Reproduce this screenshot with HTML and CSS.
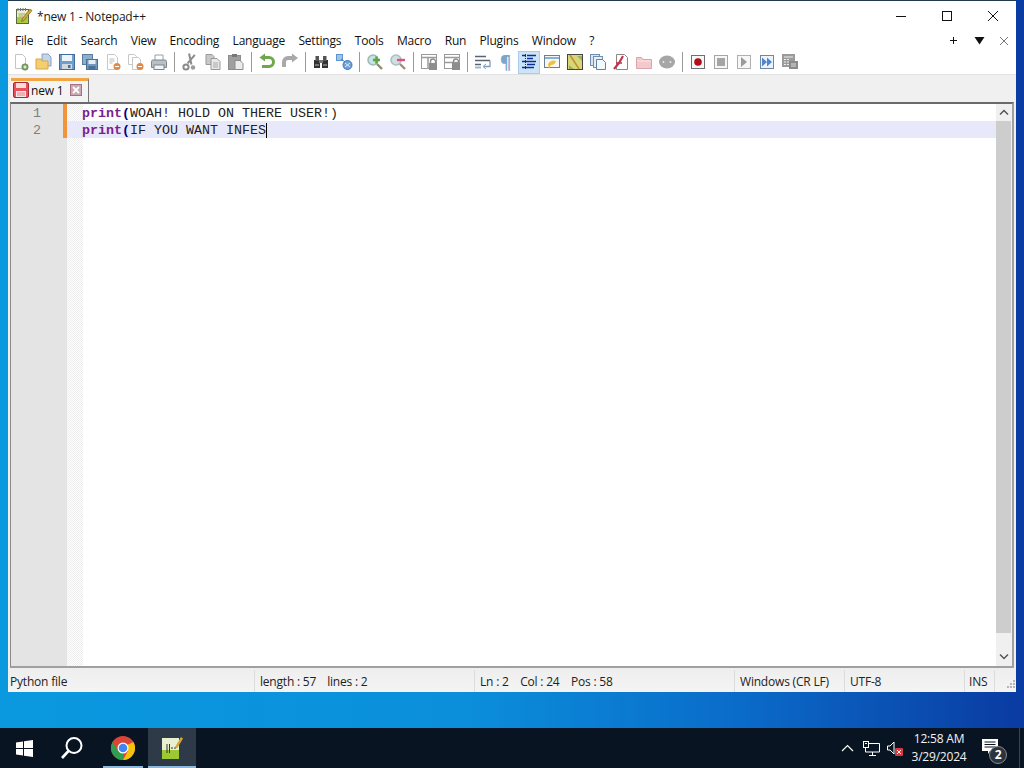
FILE: index.html

```html
<!DOCTYPE html>
<html lang="en">
<head>
    <meta charset="UTF-8">
    <title>*new 1 - Notepad++</title>
    <link rel="stylesheet" href="styles.css">
</head>
<body>

    <div class="window">

        <!-- Title bar -->
        <div class="titlebar">
            <svg class="app-icon" width="18" height="18" viewBox="0 0 18 18">
                <rect x="1.5" y="2.5" width="12" height="14" fill="#e8f0c8" stroke="#5c6648"/>
                <rect x="2" y="10" width="11" height="6" fill="#a5cc3c"/>
                <path d="M3 1v3M5.5 1v3M8 1v3M10.5 1v3" stroke="#777"/>
                <path d="M3.5 7h7M3.5 9h5" stroke="#9aa080"/>
                <path d="M7 12L15 2l2 1.5L9 13.5 6.5 14.5z" fill="#d9a53a" stroke="#6b5520" stroke-width=".6"/>
            </svg>
            <span class="title-text">*new 1 - Notepad++</span>
            <div class="win-controls">
                <div class="win-btn">
                    <svg width="12" height="12" viewBox="0 0 12 12"><path d="M1 6.5h10" stroke="#111"/></svg>
                </div>
                <div class="win-btn">
                    <svg width="12" height="12" viewBox="0 0 12 12"><rect x="1.5" y="1.5" width="9" height="9" fill="none" stroke="#111"/></svg>
                </div>
                <div class="win-btn">
                    <svg width="12" height="12" viewBox="0 0 12 12"><path d="M1 1l10 10M11 1L1 11" stroke="#111"/></svg>
                </div>
            </div>
        </div>

        <!-- Menu -->
        <div class="menubar">
            <ul class="menu-links">
                <li>File</li>
                <li>Edit</li>
                <li>Search</li>
                <li>View</li>
                <li>Encoding</li>
                <li>Language</li>
                <li>Settings</li>
                <li>Tools</li>
                <li>Macro</li>
                <li>Run</li>
                <li>Plugins</li>
                <li>Window</li>
                <li>?</li>
            </ul>
            <div class="menu-extra">
                <svg width="9" height="9" viewBox="0 0 9 9"><path d="M4.5 1v7M1 4.5h7" stroke="#111"/></svg>
                <svg width="11" height="9" viewBox="0 0 11 9"><path d="M.5 1h10L5.5 8.5z" fill="#111"/></svg>
                <svg width="10" height="10" viewBox="0 0 10 10"><path d="M1 1l8 8M9 1L1 9" stroke="#777"/></svg>
            </div>
        </div>

        <!-- Toolbar -->
        <div class="toolbar">
            <div class="tool"><svg viewBox="0 0 18 18"><path d="M3.5 1.5h7l3 3v11h-10z" fill="#fff" stroke="#c4c4c4"/><circle cx="13" cy="14" r="3.2" fill="#7fa268" stroke="#5d7a4d" stroke-width=".6"/><path d="M11.5 14h3M13 12.5v3" stroke="#fff"/></svg></div>
            <div class="tool"><svg viewBox="0 0 18 18"><path d="M7 1h6l3 3v9H7z" fill="#c4d4ea" stroke="#8aa2c4"/><path d="M1 6h5l1 2h6v8H1z" fill="#f3cf72" stroke="#d9a943"/></svg></div>
            <div class="tool"><svg viewBox="0 0 18 18"><rect x="1.5" y="1.5" width="15" height="15" fill="#6f9dcc" stroke="#3f6c9e"/><rect x="4" y="2" width="10" height="6" fill="#eef3f8"/><rect x="4" y="11" width="10" height="5" fill="#cfd8de"/><rect x="10" y="12" width="2.5" height="3" fill="#4a6f96"/></svg></div>
            <div class="tool"><svg viewBox="0 0 18 18"><rect x="1.5" y="1.5" width="10" height="10" fill="#8dafca" stroke="#5a7d9e"/><rect x="5.5" y="6.5" width="11" height="10" fill="#7199bd" stroke="#4a7096"/><rect x="7.5" y="7" width="7" height="4" fill="#e5edf3"/><rect x="7.5" y="13" width="7" height="3" fill="#4a7096"/></svg></div>
            <div class="tool"><svg viewBox="0 0 18 18"><path d="M3.5 1.5h7l3 3v12h-10z" fill="#fff" stroke="#c8c8c8"/><path d="M5.5 6h5M5.5 8h5M5.5 10h3" stroke="#bbb"/><circle cx="13" cy="13.5" r="3.5" fill="#e08a4a"/><path d="M11 13.5h4" stroke="#fff"/></svg></div>
            <div class="tool"><svg viewBox="0 0 18 18"><path d="M1.5 1.5h6l2 2v8h-8z" fill="#fff" stroke="#c8c8c8"/><path d="M5.5 4.5h6l2 2v10h-8z" fill="#fff" stroke="#c8c8c8"/><circle cx="13" cy="13.5" r="3.5" fill="#e08a4a"/><path d="M11 13.5h4" stroke="#fff"/></svg></div>
            <div class="tool"><svg viewBox="0 0 18 18"><path d="M5 7V2h8v5" fill="#fff" stroke="#9aa0a6"/><path d="M1.5 8.5Q1.5 7 3 7h12q1.5 0 1.5 1.5v6h-15z" fill="#b9c0c7" stroke="#7e868e"/><rect x="4" y="12" width="10" height="4.5" fill="#f4f4f4" stroke="#7e868e"/></svg></div>
            <div class="tool-sep"></div>
            <div class="tool"><svg viewBox="0 0 18 18"><path d="M12 1L7 11M6 1l5 10" stroke="#8b8b8b" stroke-width="2" transform="rotate(14 9 9)"/><circle cx="5" cy="14" r="2.6" fill="none" stroke="#8b8b8b" stroke-width="2"/><circle cx="12" cy="14.5" r="2.2" fill="#9c9c9c"/></svg></div>
            <div class="tool"><svg viewBox="0 0 18 18"><path d="M2 1.5h6l2 2v8H2z" fill="#c8c8c8" stroke="#999"/><path d="M7 5.5h6l3 3v8H7z" fill="#e8e8e8" stroke="#999"/><path d="M9 10h5M9 12h5M9 14h5" stroke="#aaa"/></svg></div>
            <div class="tool"><svg viewBox="0 0 18 18"><rect x="1.5" y="2.5" width="12" height="14" fill="#9f9f9f" stroke="#8c8c8c"/><rect x="5" y="1" width="5" height="3" fill="#777"/><path d="M8 7.5h5l3 3v6H8z" fill="#ececec" stroke="#8c8c8c"/></svg></div>
            <div class="tool-sep"></div>
            <div class="tool"><svg viewBox="0 0 18 18"><path d="M5.5 4.5H11a4.5 4.5 0 0 1 0 9H4" fill="none" stroke="#6fa84a" stroke-width="3"/><path d="M7 .5v8L1.5 4.5z" fill="#6fa84a"/></svg></div>
            <div class="tool"><svg viewBox="0 0 18 18"><path d="M12.5 5H7a4 4 0 0 0-4 4v5" fill="none" stroke="#a9a9a9" stroke-width="4"/><path d="M11 .5v9L17 5z" fill="#a9a9a9"/></svg></div>
            <div class="tool-sep"></div>
            <div class="tool"><svg viewBox="0 0 18 18"><rect x="2" y="7" width="6" height="8" fill="#333"/><rect x="10" y="7" width="6" height="8" fill="#333"/><rect x="3.5" y="3" width="3.5" height="5" fill="#555"/><rect x="11" y="3" width="3.5" height="5" fill="#555"/><rect x="7" y="7" width="4" height="3" fill="#777"/><path d="M3 12h4M11 12h4" stroke="#bbb"/></svg></div>
            <div class="tool"><svg viewBox="0 0 18 18"><rect x="1.5" y="1.5" width="6" height="6" fill="#9cc4ea" stroke="#5f96cf"/><circle cx="12.5" cy="12" r="4.5" fill="#6fa0d8" stroke="#3f78b8"/><path d="M10 10l5 4M15 10l-5 4" stroke="#dbe8f5"/><path d="M6 6l4 3" stroke="#3f78b8"/></svg></div>
            <div class="tool-sep"></div>
            <div class="tool"><svg viewBox="0 0 18 18"><circle cx="7" cy="7" r="5" fill="#c3e4e0" stroke="#9db8b8" stroke-width="1.5"/><path d="M11 11l5 5" stroke="#8b8f70" stroke-width="2.4"/><path d="M7 7h7M10.5 3.5v7" stroke="#5da53f" stroke-width="2.4"/></svg></div>
            <div class="tool"><svg viewBox="0 0 18 18"><circle cx="7" cy="7" r="5" fill="#cfe0e4" stroke="#aebcc0" stroke-width="1.5"/><path d="M11 11l5 5" stroke="#a08c80" stroke-width="2.4"/><path d="M8 7h8" stroke="#e0507a" stroke-width="2.4"/></svg></div>
            <div class="tool-sep"></div>
            <div class="tool"><svg viewBox="0 0 18 18"><rect x="1.5" y="1.5" width="15" height="14" fill="#fff" stroke="#9a9a9a"/><path d="M2 4.5h14M8 5v10" stroke="#9a9a9a" stroke-width="1.5"/><rect x="9" y="10" width="8" height="7" fill="#8d8d8d"/><path d="M10.5 10V8.5a2.5 2.5 0 0 1 5 0V10" fill="none" stroke="#8d8d8d" stroke-width="1.4"/></svg></div>
            <div class="tool"><svg viewBox="0 0 18 18"><rect x="1.5" y="1.5" width="15" height="14" fill="#fff" stroke="#9a9a9a"/><path d="M2 4.5h14M2 9.5h14" stroke="#9a9a9a" stroke-width="1.5"/><rect x="9" y="10" width="8" height="7" fill="#8d8d8d"/><path d="M10.5 10V8.5a2.5 2.5 0 0 1 5 0V10" fill="none" stroke="#8d8d8d" stroke-width="1.4"/></svg></div>
            <div class="tool-sep"></div>
            <div class="tool"><svg viewBox="0 0 18 18"><path d="M1 3.5h11M1 7.5h15M1 11.5h6" stroke="#5a6472" stroke-width="1.4"/><path d="M16 7.5v6H10" fill="none" stroke="#7c9cc0" stroke-width="1.3"/><path d="M12 11l-3 2.5 3 2.5" fill="none" stroke="#7c9cc0"/><path d="M1 14.5h6" stroke="#9fb6d0" stroke-width="2"/></svg></div>
            <div class="tool tool-pilcrow">¶</div>
            <div class="tool tool-active"><svg viewBox="0 0 18 18"><path d="M5.5 1v16" stroke="#0b2f99" stroke-dasharray="1 1"/><path d="M2 2.5h4M7 2.5h9M7 5.5h6M2 8.5h14M7 11.5h8M2 14.5h12" stroke="#0b2f99" stroke-width="1.5"/></svg></div>
            <div class="tool"><svg viewBox="0 0 18 18"><rect x="1.5" y="2.5" width="15" height="12" fill="#f6f6f6" stroke="#6b7f8f"/><path d="M2 5h14" stroke="#6fa0cc" stroke-width="1.6"/><path d="M5 11q3-5 8-3-1 4-5 4l-2 4z" fill="#f1c038"/></svg></div>
            <div class="tool"><svg viewBox="0 0 18 18"><rect x="1.5" y="1.5" width="15" height="15" fill="#d9d67a" stroke="#444"/><path d="M4 2l9 14" stroke="#b8902e" stroke-width="1.4"/><path d="M11 3h5v5zM3 12l5 4H3z" fill="#9ab35a"/></svg></div>
            <div class="tool"><svg viewBox="0 0 18 18"><rect x="1.5" y="1.5" width="9" height="11" fill="#d8e4f0" stroke="#6f8fb0"/><rect x="4.5" y="3.5" width="9" height="11" fill="#e6eef6" stroke="#6f8fb0"/><path d="M7.5 6.5h6l3 3v7h-9z" fill="#f4f8fc" stroke="#5f82a8"/></svg></div>
            <div class="tool"><svg viewBox="0 0 18 18"><path d="M4.5 1.5h8l3 3v12h-11z" fill="#fff" stroke="#8f8585"/><path d="M2 16l5-6M7 10l4-7" stroke="#c2354e" stroke-width="2.2"/><path d="M4 10h6" stroke="#c2354e" stroke-width="1.6"/></svg></div>
            <div class="tool"><svg viewBox="0 0 18 18"><path d="M1.5 4.5h5l1.5 2h8.5v9h-15z" fill="#f4c9cd" stroke="#d9a5aa"/><path d="M2 8h14" stroke="#fbe4e6"/></svg></div>
            <div class="tool"><svg viewBox="0 0 18 18"><ellipse cx="9" cy="9" rx="8" ry="6.5" fill="#a6a6a6"/><circle cx="5.5" cy="9" r=".9" fill="#eee"/><circle cx="12.5" cy="9" r=".9" fill="#eee"/></svg></div>
            <div class="tool-sep"></div>
            <div class="tool"><svg viewBox="0 0 18 18"><rect x="2.5" y="2.5" width="13" height="13" fill="#f7f7f7" stroke="#6a6f78"/><circle cx="9" cy="9" r="3.8" fill="#b00d16"/></svg></div>
            <div class="tool"><svg viewBox="0 0 18 18"><rect x="2.5" y="2.5" width="13" height="13" fill="#f7f7f7" stroke="#a5a5a5"/><rect x="5" y="5" width="8" height="8" fill="#a5a5a5"/></svg></div>
            <div class="tool"><svg viewBox="0 0 18 18"><rect x="2.5" y="2.5" width="13" height="13" fill="#f7f7f7" stroke="#b0b0b0"/><path d="M6 4l6 5-6 5z" fill="#9a9a9a"/></svg></div>
            <div class="tool"><svg viewBox="0 0 18 18"><rect x="2.5" y="2.5" width="13" height="13" fill="#eef3f9" stroke="#6d87a5"/><path d="M4 4.5L9 9l-5 4.5zM9 4.5L14 9l-5 4.5z" fill="#4f85cf"/></svg></div>
            <div class="tool"><svg viewBox="0 0 18 18"><rect x="1" y="1" width="13" height="13" fill="#9b9b9b"/><path d="M3 4h9M3 6.5h2M6 6.5h2M3 9h2M6 9h2M3 11.5h2M6 11.5h2" stroke="#eee"/><rect x="8" y="8" width="9" height="8" fill="#8a8a8a"/><path d="M10 11h5M10 13h5" stroke="#ddd"/></svg></div>
        </div>

        <!-- Tabs -->
        <div class="tabbar">
            <div class="tab">
                <svg class="tab-icon" width="16" height="16" viewBox="0 0 16 16">
                    <rect x=".5" y=".5" width="15" height="15" rx="1.5" fill="#e8505a" stroke="#a82a34"/>
                    <rect x="3" y="1" width="10" height="5" fill="#f8dcdc"/>
                    <rect x="3" y="9" width="10" height="6" fill="#f8e8e8"/>
                    <path d="M4 11h8M4 13h8" stroke="#e07a80"/>
                </svg>
                <span class="tab-name">new 1</span>
                <svg class="tab-close" width="12" height="12" viewBox="0 0 12 12">
                    <rect x=".5" y=".5" width="11" height="11" fill="#c9a9b5" stroke="#a8707f"/>
                    <path d="M3 3l6 6M9 3L3 9" stroke="#fff" stroke-width="1.8"/>
                </svg>
            </div>
        </div>

        <!-- Editor -->
        <div class="editor">
            <div class="line-numbers">
                <div>1</div>
                <div>2</div>
            </div>
            <div class="changes"></div>
            <div class="code">
                <div class="line"><span class="kw">print</span><span class="op">(</span>WOAH! HOLD ON THERE USER!)</div>
                <div class="line current"><span class="kw">print</span><span class="op">(</span><span class="caret">IF YOU WANT INFES</span></div>
            </div>
            <div class="scrollbar">
                <div class="scroll-arrow">
                    <svg width="10" height="7" viewBox="0 0 10 7"><path d="M1 5.5l4-4 4 4" fill="none" stroke="#555" stroke-width="1.5"/></svg>
                </div>
                <div class="scroll-thumb"></div>
                <div class="scroll-arrow">
                    <svg width="10" height="7" viewBox="0 0 10 7"><path d="M1 1.5l4 4 4-4" fill="none" stroke="#555" stroke-width="1.5"/></svg>
                </div>
            </div>
        </div>

        <!-- Status bar -->
        <div class="statusbar">
            <div class="cell cell-type">Python file</div>
            <div class="cell cell-size"><span>length : 57</span><span>lines : 2</span></div>
            <div class="cell cell-pos"><span>Ln : 2</span><span>Col : 24</span><span>Pos : 58</span></div>
            <div class="cell cell-eol">Windows (CR LF)</div>
            <div class="cell cell-enc">UTF-8</div>
            <div class="cell cell-ins">INS</div>
            <div class="cell cell-grip">
                <svg width="12" height="12" viewBox="0 0 12 12"><path d="M9 2h2v2H9zM6 5h2v2H6zM9 5h2v2H9zM3 8h2v2H3zM6 8h2v2H6zM9 8h2v2H9z" fill="#b5b5b5"/></svg>
            </div>
        </div>
    </div>

    <!-- Taskbar -->
    <div class="taskbar">
        <div class="task-btn">
            <svg width="17" height="17" viewBox="0 0 17 17"><path d="M0 2.5l7-1V8H0zM8 1.3L17 0v8H8zM0 9h7v6.5l-7-1zM8 9h9v8l-9-1.3z" fill="#fff"/></svg>
        </div>
        <div class="task-btn">
            <svg width="24" height="24" viewBox="0 0 24 24"><circle cx="14" cy="9.5" r="7.5" fill="none" stroke="#fff" stroke-width="2"/><path d="M8.5 15L2 22" stroke="#fff" stroke-width="2.6"/></svg>
        </div>
        <div class="task-btn task-open">
            <svg width="24" height="24" viewBox="0 0 24 24">
                <circle cx="12" cy="12" r="12" fill="#db4437"/>
                <path d="M12 24A12 12 0 0 1 1.6 6L7 15l5 1z" fill="#2f9e4f"/>
                <path d="M22.4 6A12 12 0 0 1 12 24l5-9-1-6z" fill="#f4c20d"/>
                <circle cx="12" cy="12" r="5.5" fill="#fff"/>
                <circle cx="12" cy="12" r="4.3" fill="#4285f4"/>
            </svg>
        </div>
        <div class="task-btn task-open task-active">
            <svg width="24" height="26" viewBox="0 0 24 26">
                <rect x="2" y="3" width="17" height="21" fill="#e9f0cf"/>
                <rect x="2" y="15" width="17" height="9" fill="#9cc832"/>
                <path d="M7 9v9M9.5 9v9" stroke="#333"/>
                <path d="M11 13h5" stroke="#333" stroke-dasharray="2 1"/>
                <path d="M15 12l6-10 2 1.5-6 10z" fill="#d9a53a"/>
            </svg>
        </div>
        <div class="tray">
            <div class="tray-icon">
                <svg width="13" height="8" viewBox="0 0 13 8"><path d="M1 7l5.5-5.5L12 7" fill="none" stroke="#fff" stroke-width="1.2"/></svg>
            </div>
            <div class="tray-icon">
                <svg width="17" height="15" viewBox="0 0 17 15"><path d="M4.5 2.5h12V11h-14V7M9.5 11v3M6 14.5h7" fill="none" stroke="#fff"/><rect x=".5" y=".5" width="5" height="6" fill="#0a1420" stroke="#fff"/><path d="M2 2.5h2" stroke="#fff"/></svg>
            </div>
            <div class="tray-icon">
                <svg width="18" height="15" viewBox="0 0 18 15"><path d="M1.5 5v4H4l4 4V1L4 5z" fill="none" stroke="#fff"/><rect x="9" y="7" width="8" height="8" rx="1" fill="#d8353d"/><path d="M11 9l4 4M15 9l-4 4" stroke="#fff"/></svg>
            </div>
            <div class="clock">
                <div>12:58 AM</div>
                <div>3/29/2024</div>
            </div>
            <div class="notify">
                <svg width="17" height="15" viewBox="0 0 17 15"><path d="M0 0h16v12H8l-2 3v-3H0z" fill="#fff"/><path d="M2.5 3h11M2.5 5.5h11M2.5 8h11" stroke="#0a1420"/></svg>
                <span class="notify-badge">2</span>
            </div>
            <div class="show-desktop"></div>
        </div>
    </div>

</body>
</html>
```

FILE: styles.css

```css
/* General */
* {
    margin: 0;
    padding: 0;
    box-sizing: border-box;
}

body {
    width: 1024px;
    height: 768px;
    display: flex;
    flex-direction: column;
    overflow: hidden;
    font-family: "Open Sans", "Liberation Sans", sans-serif;
    font-size: 12px;
    letter-spacing: -0.2px;
    color: #111;
    background: linear-gradient(to right, #0a99df 0%, #0b8fdb 45%, #0a6cc9 72%, #0a3ba2 100%);
}

svg {
    display: block;
}

/* Window */
.window {
    height: 692px;
    margin: 0 8px 36px;
    display: flex;
    flex-direction: column;
    background: #f0f0f0;
    border-top: 1px solid #22384c;
}

.titlebar {
    height: 30px;
    display: flex;
    align-items: center;
    background: #fff;
    padding-left: 7px;
}

.app-icon {
    margin-right: 4px;
}

.title-text {
    flex: 1;
    color: #1a1a1a;
}

.win-controls {
    display: flex;
}

.win-btn {
    width: 46px;
    height: 30px;
    display: flex;
    align-items: center;
    justify-content: center;
}

/* Menu */
.menubar {
    height: 19px;
    display: flex;
    align-items: center;
    justify-content: space-between;
    background: #fff;
    padding-left: 7px;
}

.menu-links {
    list-style: none;
    display: flex;
    gap: 13.4px;
}

.menu-extra {
    display: flex;
    align-items: center;
    gap: 14px;
    padding-right: 7px;
}

.menu-extra svg:first-child {
    margin-right: 2px;
}

/* Toolbar */
.toolbar {
    height: 25px;
    display: flex;
    align-items: center;
    padding-left: 1px;
    background: #fff;
    border-bottom: 1px solid #e2e2e2;
}

.tool {
    width: 23px;
    height: 23px;
    display: flex;
    align-items: center;
    justify-content: center;
}

.tool svg {
    width: 18px;
    height: 18px;
}

.tool-active {
    width: 22px;
    margin-left: 1px;
    background: #cde4f7;
    border: 1px solid #a8cdec;
}

.tool-pilcrow {
    font-size: 17px;
    font-weight: 700;
    color: #7aa6cc;
}

.tool-sep {
    width: 8px;
    height: 20px;
    display: flex;
    justify-content: center;
}

.tool-sep::before {
    content: "";
    width: 1px;
    background: #9a9a9a;
}

/* Tabs */
.tabbar {
    height: 27px;
    padding: 3px 0 0 3px;
    background: #f0f0f0;
}

.tab {
    width: 78px;
    height: 24px;
    display: flex;
    align-items: center;
    padding: 0 0 3px 2px;
    background: #f4f4f4;
    border-top: 3px solid #f2a544;
    border-right: 1px solid #777;
}

.tab-name {
    margin-left: 2px;
    width: 39px;
}

/* Editor */
.editor {
    flex: 1;
    display: flex;
    margin: 0 2px;
    background: #fff;
    border-top: 2px solid #6a6a6a;
    border-left: 1px solid #8a8a8a;
    border-right: 2px solid #a0a0a0;
    border-bottom: 2px solid #a0a0a0;
    font-family: "Liberation Mono", monospace;
    font-size: 13.33px;
    letter-spacing: 0;
    line-height: 19px;
}

.line-numbers {
    width: 52px;
    background: #e4e4e4;
    color: #808080;
    text-align: right;
    padding-right: 22px;
}

.line-numbers div {
    height: 17px;
}

.changes {
    width: 4px;
    background: linear-gradient(#f2943a, #f2943a) top / 100% 34px no-repeat, #e4e4e4;
}

.code {
    flex: 1;
    background:
        linear-gradient(to right, transparent 16px, #fff 16px),
        repeating-conic-gradient(#ededed 0 25%, #fff 0 50%) 0 0 / 2px 2px;
    color: #222;
}

.line {
    height: 17px;
    padding-left: 15px;
    white-space: pre;
}

.line.current {
    background: #e8e8fb;
}

.kw {
    color: #7a1f8c;
    font-weight: 700;
}

.op {
    color: #000080;
    font-weight: 700;
}

.caret {
    border-right: 1px solid #000;
}

/* Scrollbar */
.scrollbar {
    width: 16px;
    display: flex;
    flex-direction: column;
    background: #f0f0f0;
}

.scroll-arrow {
    height: 17px;
    display: flex;
    align-items: center;
    justify-content: center;
}

.scroll-thumb {
    height: 512px;
    margin-right: 1px;
    background: #cdcdcd;
}

.scroll-thumb + .scroll-arrow {
    margin-top: auto;
    margin-bottom: 1px;
}

/* Status bar */
.statusbar {
    height: 24px;
    display: grid;
    grid-template-columns: 247px 220px 260px 110px 120px 30px 21px;
    align-items: stretch;
    padding-top: 2px;
    background: linear-gradient(to bottom, #eeeeee, #f4f4f4);
    color: #222;
}

.cell {
    display: flex;
    align-items: center;
    padding-left: 5px;
    border-right: 1px solid #dcdcdc;
}

.cell-type {
    padding-left: 2px;
}

.cell-size {
    gap: 11px;
}

.cell-pos {
    gap: 11.5px;
}

.cell-ins {
    padding-left: 4px;
}

.cell-grip {
    border-right: none;
    justify-content: flex-end;
    padding: 6px 0 0;
}

/* Taskbar */
.taskbar {
    height: 40px;
    display: flex;
    background: #081422;
    color: #fff;
}

.task-btn {
    width: 48px;
    display: flex;
    align-items: center;
    justify-content: center;
}

.task-open {
    position: relative;
    margin-left: 3px;
}

.task-open::after {
    content: "";
    position: absolute;
    left: 4px;
    right: 4px;
    bottom: 0;
    height: 2px;
    background: #8cb8dc;
}

.task-active {
    margin-left: 1px;
    background: #2e3a47;
}

.task-active::after {
    left: 0;
    right: 0;
}

.tray {
    margin-left: auto;
    display: flex;
    align-items: center;
    height: 40px;
}

.tray-icon {
    width: 24px;
    display: flex;
    align-items: center;
    justify-content: center;
}

.clock {
    width: 64px;
    text-align: center;
    line-height: 18px;
    color: #f2f2f2;
}

.notify {
    width: 42px;
    height: 40px;
    display: flex;
    align-items: center;
    justify-content: center;
    padding: 0 4px 4px 0;
    position: relative;
}

.notify-badge {
    position: absolute;
    left: 18px;
    top: 18px;
    width: 18px;
    height: 18px;
    border-radius: 50%;
    background: #2a333e;
    border: 1px solid #8a8a8a;
    font-size: 12px;
    font-weight: 700;
    line-height: 16px;
    text-align: center;
}

.show-desktop {
    width: 11px;
    height: 40px;
    background: linear-gradient(to right, #081422 6px, #3a4450 6px, #3a4450 7px, #081422 7px);
}
```
